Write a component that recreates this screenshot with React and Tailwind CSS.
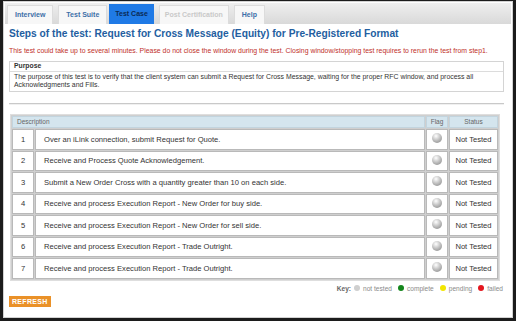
import React from 'react';

const tabs = [
  { label: 'Interview', state: 'normal' },
  { label: 'Test Suite', state: 'normal' },
  { label: 'Test Case', state: 'active' },
  { label: 'Post Certification', state: 'disabled' },
  { label: 'Help', state: 'normal' },
];

const steps = [
  'Over an iLink connection, submit Request for Quote.',
  'Receive and Process Quote Acknowledgement.',
  'Submit a New Order Cross with a quantity greater than 10 on each side.',
  'Receive and process Execution Report - New Order for buy side.',
  'Receive and process Execution Report - New Order for sell side.',
  'Receive and process Execution Report - Trade Outright.',
  'Receive and process Execution Report - Trade Outright.',
];

const Ball = () => (
  <span className="inline-block w-[10px] h-[10px] rounded-full bg-[radial-gradient(circle_at_40%_30%,#ffffff,#c4c4c4_45%,#808080)]" />
);

const App = () => {
  return (
    <div
      className="w-[516px] h-[321px] bg-[#1c1c1c] pt-px px-[3px] pb-[3px]"
      style={{ fontFamily: '"Liberation Sans", Arial, sans-serif' }}
    >
      <div className="h-full bg-white border border-[#d2d2d2] flex flex-col">
        {/* tab bar */}
        <div className="mx-px mt-px h-[21px] bg-gradient-to-b from-[#efefef] to-[#d9d9d9] flex items-end pl-[2px]">
          {tabs.map((t) => (
            <div
              key={t.label}
              className={
                t.state === 'active'
                  ? 'ml-[2px] h-[20px] px-[6px] flex items-center bg-[#1f7ae6] text-[#0b2a55] text-[7px] font-bold'
                  : t.state === 'disabled'
                  ? 'ml-[5px] h-[19px] px-[5px] flex items-center bg-[#f7f7f7] border border-b-0 border-[#dcdcdc] text-[#c9c9c9] text-[7px] font-bold'
                  : 'ml-[5px] first:ml-0 h-[19px] px-[7px] flex items-center bg-[#f7f7f7] border border-b-0 border-[#dcdcdc] text-[#3d6fa8] text-[7px] font-bold'
              }
            >
              {t.label}
            </div>
          ))}
        </div>

        <div className="pl-[5px] pr-[8px]">
          <h1 className="mt-[3px] text-[10.2px] leading-[14px] font-bold text-[#235ea0]">
            Steps of the test: Request for Cross Message (Equity) for Pre-Registered Format
          </h1>
          <p className="mt-[5px] text-[6.9px] leading-[9px] text-[#c0302a] whitespace-nowrap">
            This test could take up to several minutes. Please do not close the window during the test. Closing window/stopping test requires to rerun the test from step1.
          </p>

          <div className="mt-[6px] border border-[#d4d4d4]">
            <div className="h-[10px] px-[4px] flex items-center border-b border-[#dcdcdc] text-[6.8px] font-bold text-[#333]">
              Purpose
            </div>
            <p className="px-[4px] pt-[1px] pb-[3px] text-[6.9px] leading-[7.5px] text-[#333]">
              The purpose of this test is to verify that the client system can submit a Request for Cross Message, waiting for the proper RFC window, and process all Acknowledgments and Fills.
            </p>
          </div>

          <div className="mt-[11px] h-[2px] border-t border-[#c9c9c9] bg-[#f0f0f0]" />

          <table className="mt-[9px] ml-px w-[490px] border-separate border-spacing-[1px] bg-[#cfcfcf] border border-[#dedede] text-[7.6px] text-[#333]">
            <thead>
              <tr className="h-[12px] bg-[#d4e5ee] text-[6.5px] text-[#666] font-normal">
                <th colSpan={2} className="text-left font-normal pl-[4px] border border-[#c2d4de]">Description</th>
                <th className="font-normal w-[22px] border border-[#c2d4de]">Flag</th>
                <th className="font-normal w-[49px] border border-[#c2d4de]">Status</th>
              </tr>
            </thead>
            <tbody>
              {steps.map((s, i) => (
                <tr key={i} className="h-[20.5px] bg-white">
                  <td className="w-[22px] text-center border border-[#b9b9b9]">{i + 1}</td>
                  <td className="pl-[8px] border border-[#b9b9b9]">{s}</td>
                  <td className="text-center border border-[#b9b9b9] leading-none">
                    <Ball />
                  </td>
                  <td className="text-center border border-[#b9b9b9]">Not Tested</td>
                </tr>
              ))}
            </tbody>
          </table>

          <div className="mt-[3px] flex justify-end items-center gap-[3px] pr-[1px] text-[6.6px] text-[#8a8a8a]">
            <span className="font-bold text-[#666]">Key:</span>
            <span className="inline-block w-[6px] h-[6px] rounded-full bg-[#cfcfcf]" />
            <span className="mr-[3px]">not tested</span>
            <span className="inline-block w-[6px] h-[6px] rounded-full bg-[#14861c]" />
            <span className="mr-[3px]">complete</span>
            <span className="inline-block w-[6px] h-[6px] rounded-full bg-[#f2e600]" />
            <span className="mr-[3px]">pending</span>
            <span className="inline-block w-[6px] h-[6px] rounded-full bg-[#e3161e]" />
            <span>failed</span>
          </div>

          <button className="mt-[3px] h-[11px] px-[3px] bg-[#ea9128] text-white text-[7px] font-bold tracking-[0.3px] leading-none flex items-center">
            REFRESH
          </button>
        </div>
      </div>
    </div>
  );
};

export default App;
